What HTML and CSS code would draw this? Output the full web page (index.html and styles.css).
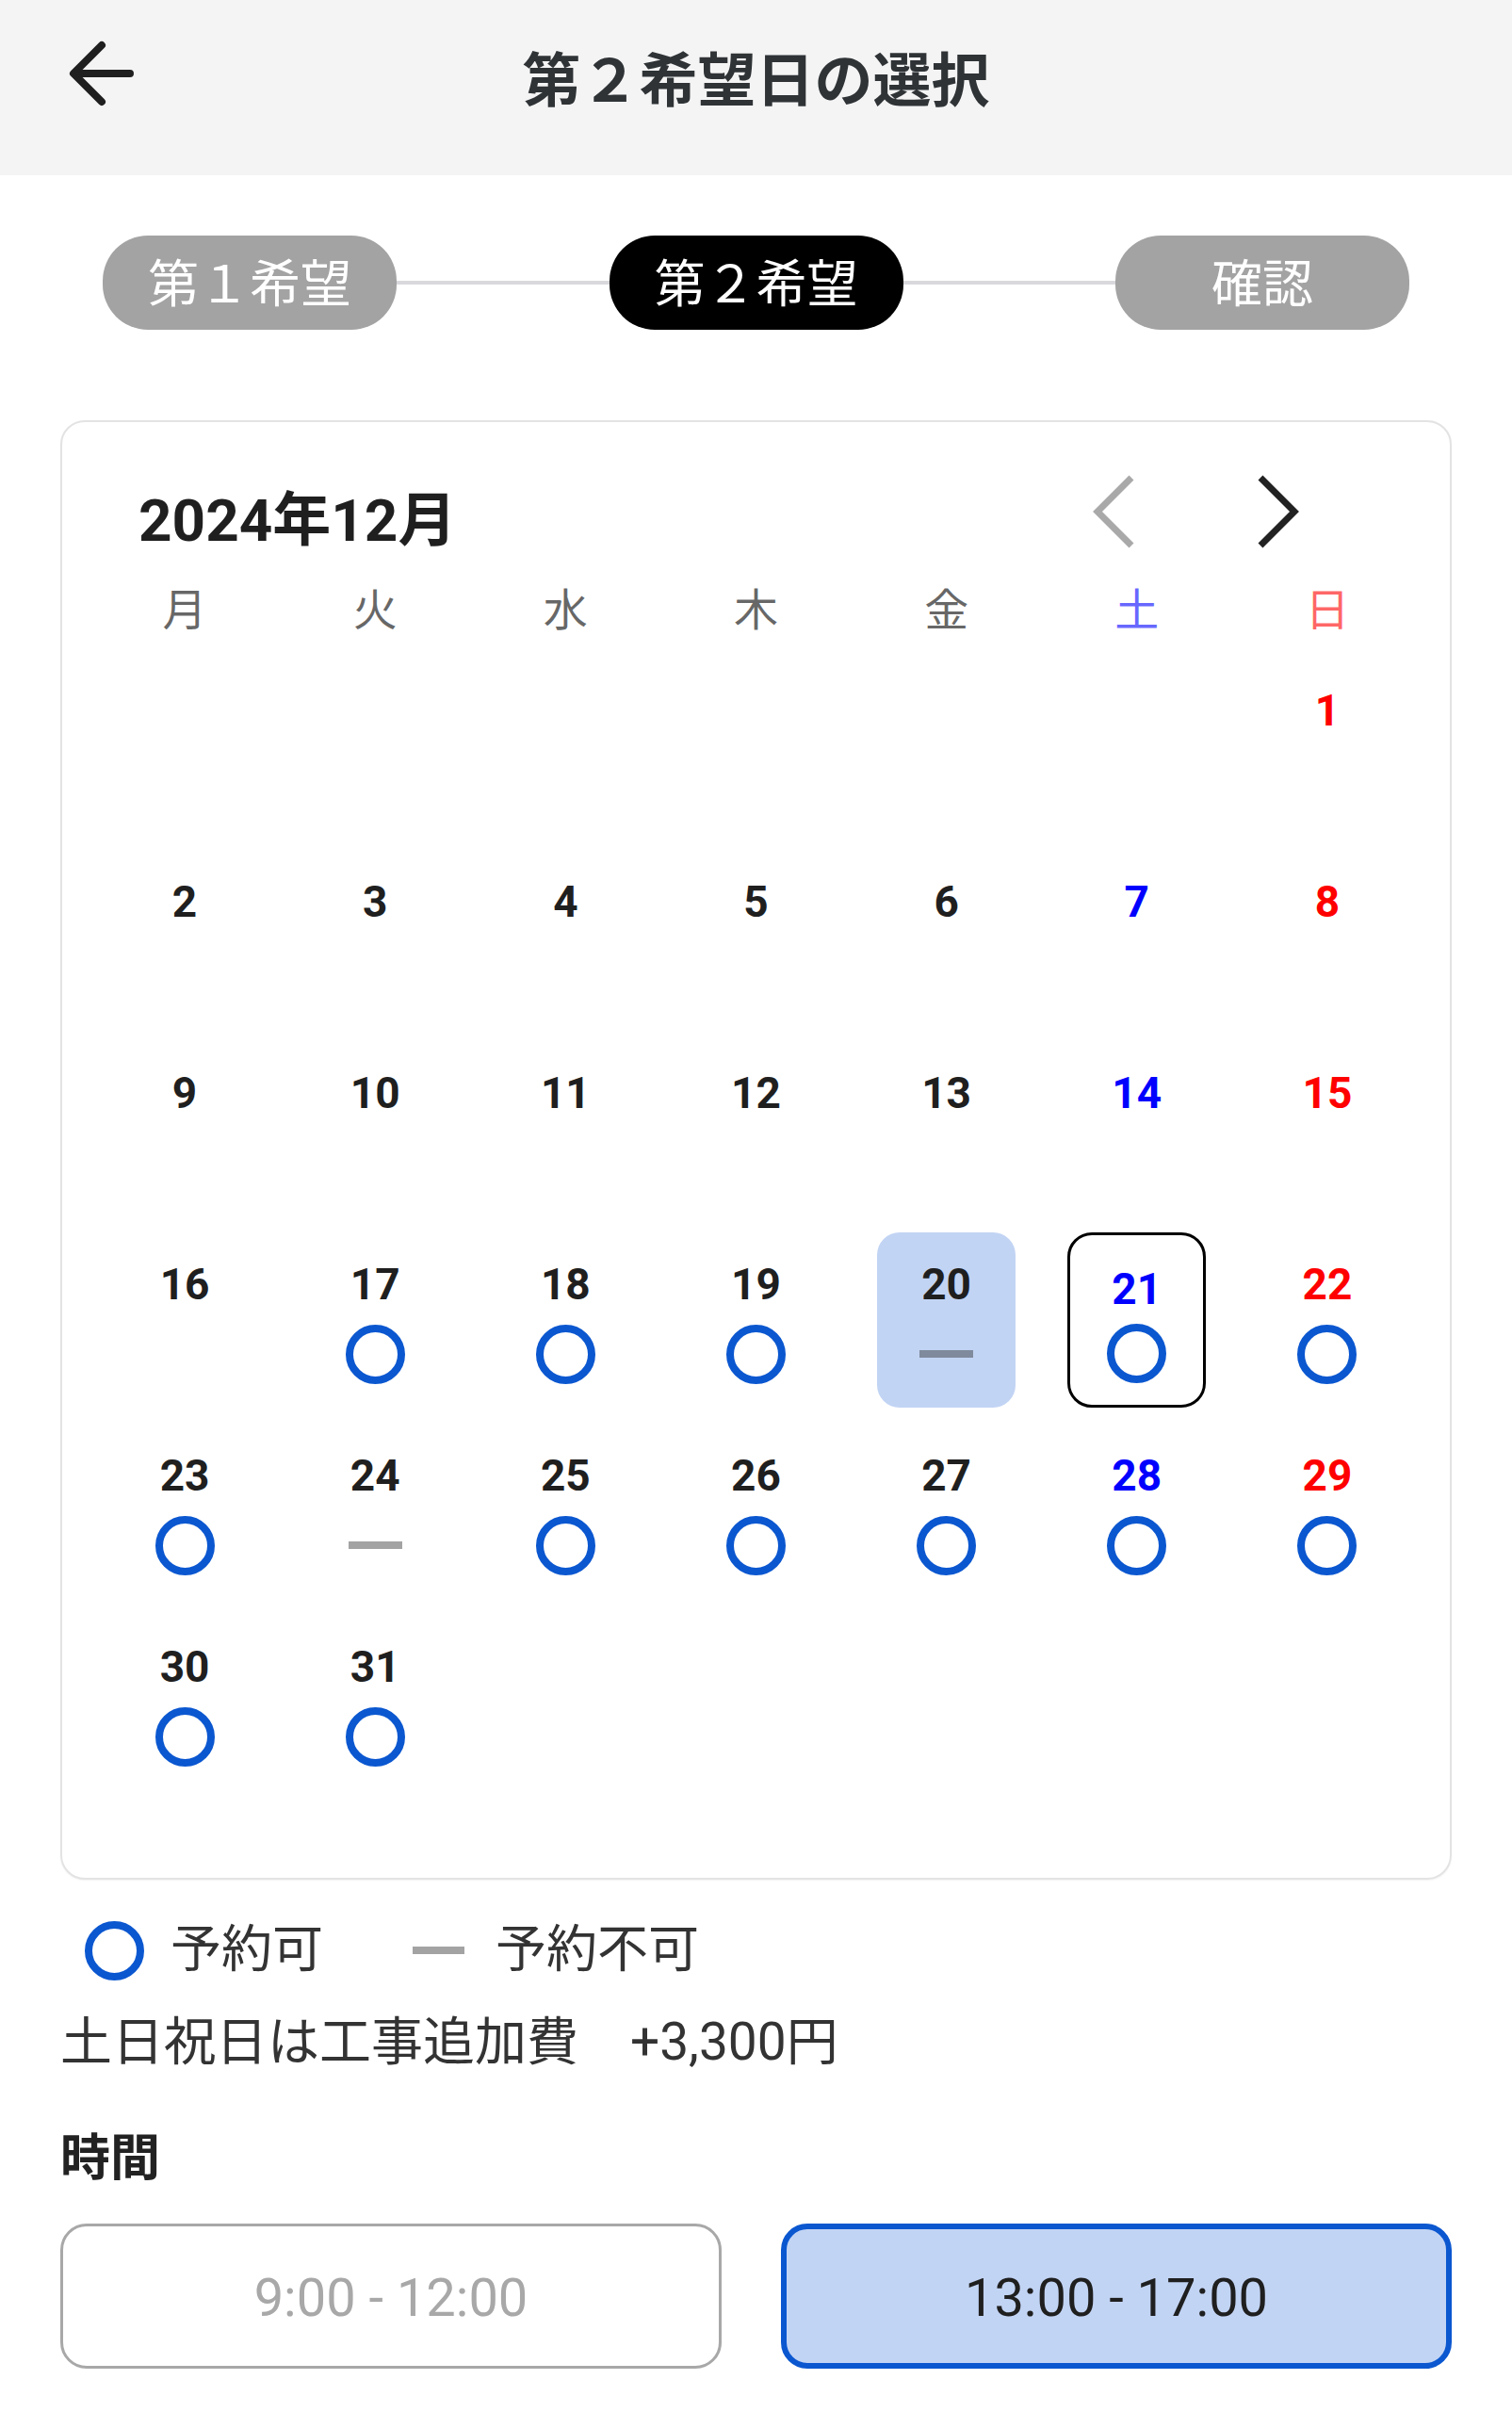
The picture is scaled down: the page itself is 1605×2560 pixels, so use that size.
FILE: index.html
```html
<!DOCTYPE html>
<html lang="ja">
<head>
<meta charset="utf-8">
<title>第２希望日の選択</title>
<link rel="stylesheet" href="styles.css">
</head>
<body>
<header class="appbar">
  <div class="back">
    <svg width="80" height="80" viewBox="0 0 80 80"><path d="M40 10 L10 40 L40 70 M12 40 H70" fill="none" stroke="#1f1f1f" stroke-width="8" stroke-linecap="round" stroke-linejoin="round"/></svg>
  </div>
  <h1 class="title">第２希望日の選択</h1>
  <div></div>
</header>

<main class="main">
  <div class="steps">
    <div class="pill">第１希望</div>
    <div class="line"></div>
    <div class="pill active">第２希望</div>
    <div class="line"></div>
    <div class="pill">確認</div>
  </div>

  <section class="card">
    <div class="cal-head">
      <div class="month">2024年12月</div>
      <div class="nav">
        <svg class="chev" width="60" height="80" viewBox="0 0 60 80"><path d="M50 4 L14 40 L50 76" fill="none" stroke="#a9a9a9" stroke-width="7"/></svg>
        <svg class="chev" width="60" height="80" viewBox="0 0 60 80"><path d="M10 4 L46 40 L10 76" fill="none" stroke="#222" stroke-width="7"/></svg>
      </div>
    </div>
    <div class="weekdays">
      <div>月</div><div>火</div><div>水</div><div>木</div><div>金</div><div class="sat">土</div><div class="sun">日</div>
    </div>
    <div class="grid">
      <div class="cell"></div><div class="cell"></div><div class="cell"></div><div class="cell"></div><div class="cell"></div><div class="cell"></div>
      <div class="cell"><span class="num sun">1</span></div>

      <div class="cell"><span class="num">2</span></div>
      <div class="cell"><span class="num">3</span></div>
      <div class="cell"><span class="num">4</span></div>
      <div class="cell"><span class="num">5</span></div>
      <div class="cell"><span class="num">6</span></div>
      <div class="cell"><span class="num sat">7</span></div>
      <div class="cell"><span class="num sun">8</span></div>

      <div class="cell"><span class="num">9</span></div>
      <div class="cell"><span class="num">10</span></div>
      <div class="cell"><span class="num">11</span></div>
      <div class="cell"><span class="num">12</span></div>
      <div class="cell"><span class="num">13</span></div>
      <div class="cell"><span class="num sat">14</span></div>
      <div class="cell"><span class="num sun">15</span></div>

      <div class="cell"><span class="num">16</span></div>
      <div class="cell"><span class="num">17</span><span class="ok"></span></div>
      <div class="cell"><span class="num">18</span><span class="ok"></span></div>
      <div class="cell"><span class="num">19</span><span class="ok"></span></div>
      <div class="cell today"><span class="num">20</span><span class="ng"></span></div>
      <div class="cell selected"><span class="num sat">21</span><span class="ok"></span></div>
      <div class="cell"><span class="num sun">22</span><span class="ok"></span></div>

      <div class="cell"><span class="num">23</span><span class="ok"></span></div>
      <div class="cell"><span class="num">24</span><span class="ng"></span></div>
      <div class="cell"><span class="num">25</span><span class="ok"></span></div>
      <div class="cell"><span class="num">26</span><span class="ok"></span></div>
      <div class="cell"><span class="num">27</span><span class="ok"></span></div>
      <div class="cell"><span class="num sat">28</span><span class="ok"></span></div>
      <div class="cell"><span class="num sun">29</span><span class="ok"></span></div>

      <div class="cell"><span class="num">30</span><span class="ok"></span></div>
      <div class="cell"><span class="num">31</span><span class="ok"></span></div>
    </div>
  </section>

  <div class="legend">
    <span class="ok lg"></span><span class="lg-text">予約可</span>
    <span class="ng lg-dash"></span><span class="lg-text">予約不可</span>
  </div>
  <p class="fee">土日祝日は工事追加費　+3,300円</p>

  <h2 class="time-title">時間</h2>
  <div class="times">
    <button class="slot">9:00 - 12:00</button>
    <button class="slot on">13:00 - 17:00</button>
  </div>
</main>
</body>
</html>
```

FILE: styles.css
```css
* { box-sizing: border-box; }

html, body {
  margin: 0;
  padding: 0;
  background: #ffffff;
  font-family: Roboto, "Noto Sans CJK JP", "Noto Sans", sans-serif;
  color: #1f1f1f;
}

.appbar {
  height: 186px;
  background: #f4f4f4;
  display: grid;
  grid-template-columns: 1fr auto 1fr;
  align-items: start;
  padding-top: 38px;
}

.back { padding-left: 68px; }
.back svg { display: block; }

.title {
  margin: 9px 0 0;
  font-size: 62px;
  line-height: 80px;
  font-weight: 700;
  color: #2f3336;
  text-align: center;
}

.main {
  padding: 64px 64px 0;
}

.steps {
  display: flex;
  align-items: center;
  padding: 0 45px;
}

.pill {
  width: 312px;
  height: 100px;
  border-radius: 48px;
  background: #a3a3a3;
  color: #ffffff;
  font-size: 54px;
  line-height: 100px;
  padding-top: 3px;
  text-align: center;
}

.pill.active { background: #000000; }

.line {
  flex: 1;
  height: 4px;
  background: #d9d9dd;
}

.card {
  margin-top: 96px;
  border: 2px solid #e3e3e3;
  border-radius: 26px;
  padding: 63px 29px 93px;
  box-shadow: 0 1px 2px rgba(0, 0, 0, 0.05);
}

.cal-head {
  height: 80px;
  display: flex;
  align-items: center;
  justify-content: space-between;
  padding: 0 122px 0 52px;
}

.month {
  font-size: 62px;
  font-weight: 700;
  line-height: 80px;
  color: #1f1f1f;
  margin-top: 3px;
}

.nav {
  display: flex;
  gap: 117px;
  margin-top: -16px;
}

.chev { display: block; }

.weekdays {
  margin-top: 27px;
  display: grid;
  grid-template-columns: repeat(7, 1fr);
  height: 60px;
  line-height: 60px;
  font-size: 47px;
  text-align: center;
  color: rgba(0, 0, 0, 0.6);
}

.weekdays .sat { color: rgba(0, 0, 255, 0.6); }
.weekdays .sun { color: rgba(255, 0, 0, 0.6); }

.grid {
  margin-top: 21px;
  display: grid;
  grid-template-columns: repeat(7, 1fr);
  grid-auto-rows: 186px;
  row-gap: 17px;
}

.cell {
  justify-self: center;
  width: 147px;
  height: 186px;
  border-radius: 24px;
  display: flex;
  flex-direction: column;
  align-items: center;
  padding-top: 27px;
}

.num {
  display: block;
  height: 56px;
  line-height: 56px;
  font-size: 46px;
  font-weight: 700;
  color: #1f1f1f;
  margin-bottom: 15px;
}

.num.sat { color: #0000ff; }
.num.sun { color: #ff0000; }

.ok {
  display: block;
  width: 63px;
  height: 63px;
  border: 8px solid #0b57d0;
  border-radius: 50%;
}

.ng {
  display: block;
  width: 57px;
  height: 62px;
  position: relative;
}

.ng::before {
  content: "";
  position: absolute;
  left: 0;
  right: 0;
  top: 27px;
  height: 8px;
  background: #a3a3a3;
}

.cell.today { background: #c2d4f4; }
.cell.today .ng::before { background: #7f8a9c; }

.cell.selected {
  border: 3px solid #000000;
  border-radius: 26px;
  padding-top: 29px;
}
.cell.selected .num { margin-bottom: 9px; }

.legend {
  margin-top: 40px;
  height: 70px;
  display: flex;
  align-items: center;
  padding-left: 26px;
}

.ok.lg { flex: none; }

.lg-text {
  font-size: 54px;
  line-height: 70px;
  color: #333333;
  margin-left: 28px;
}

.lg-dash {
  width: 55px;
  margin-left: 95px;
}
.lg-dash + .lg-text { margin-left: 33px; }

.fee {
  margin: 27px 0 0;
  font-size: 55px;
  line-height: 70px;
  color: #333333;
}

.time-title {
  margin: 54px 0 0;
  font-size: 53px;
  line-height: 70px;
  font-weight: 700;
  color: #222222;
}

.times {
  margin-top: 34px;
  display: grid;
  grid-template-columns: 702px 1fr;
  column-gap: 63px;
}

.slot {
  height: 154px;
  border: 3px solid #a8a8a8;
  border-radius: 28px;
  background: #ffffff;
  font-family: Roboto, "Noto Sans CJK JP", sans-serif;
  font-size: 56px;
  color: #a8a8a8;
  padding: 4px 0 0;
}

.slot.on {
  border: 6px solid #0b57d0;
  background: #c2d4f4;
  color: #1f1f1f;
}
```
